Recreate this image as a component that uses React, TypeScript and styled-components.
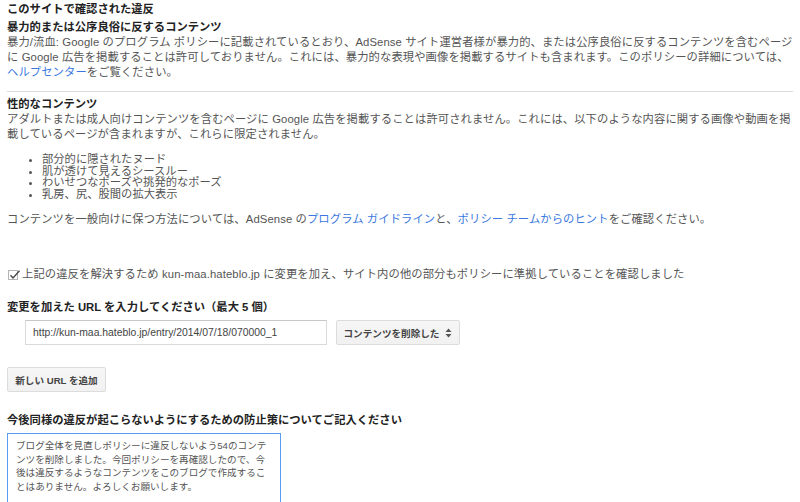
import React from "react";
import styled, { createGlobalStyle } from "styled-components";

const Global = createGlobalStyle`
  html, body { margin: 0; padding: 0; background: #fff; }
  body {
    font-family: "Liberation Sans", Arial, "Noto Sans CJK JP", sans-serif;
    color: #555;
    -webkit-font-smoothing: antialiased;
  }
`;

const Page = styled.div`
  width: 800px;
  height: 502px;
  overflow: hidden;
  padding: 2px 7px 0;
  box-sizing: border-box;
`;

const Title = styled.h2`
  margin: 0;
  font-size: 11.3px;
  line-height: 15px;
  font-weight: bold;
  color: #222;
`;

const Heading = styled.h3<{ $top?: number; $bottom?: number }>`
  margin: ${(p) => p.$top ?? 0}px 0 ${(p) => p.$bottom ?? 0}px;
  font-size: 11.3px;
  line-height: 15px;
  font-weight: bold;
  color: #222;
`;

const Body = styled.p<{ $top?: number }>`
  margin: ${(p) => p.$top ?? 0}px 0 0;
  font-size: 11.3px;
  letter-spacing: 0.1px;
  line-height: 15px;
  color: #555;
  white-space: nowrap;
`;

const Link = styled.a`
  color: #3a78de;
  text-decoration: none;
`;

const Divider = styled.hr`
  border: 0;
  border-top: 1px solid #dcdcdc;
  margin: 11px 0 5px;
`;

const List = styled.ul`
  margin: 12px 0 0;
  padding: 0 0 0 35px;
  font-size: 11.3px;
  line-height: 11.6px;
  color: #555;
  list-style: disc;
`;

const Item = styled.li`
  padding-left: 0;
`;

const CheckRow = styled.label`
  display: flex;
  align-items: center;
  gap: 4px;
  margin-top: 40px;
  font-size: 11.3px;
  letter-spacing: 0.1px;
  line-height: 15px;
  color: #555;
  white-space: nowrap;
`;

const CheckBox = styled.span`
  width: 10px;
  height: 10px;
  box-sizing: border-box;
  border: 1px solid #b5b5b5;
  background: #fff;
  position: relative;
  display: inline-flex;
  align-items: center;
  justify-content: center;
  margin-left: 1px;
`;

const UrlRow = styled.div`
  display: flex;
  align-items: center;
  gap: 9px;
  margin: 5px 0 0 18px;
`;

const UrlInput = styled.div`
  width: 302px;
  height: 25px;
  box-sizing: border-box;
  border: 1px solid #dadada;
  border-top-color: #c8c8c8;
  padding: 0 7px;
  display: flex;
  align-items: center;
  font-size: 10.4px;
  color: #444;
  background: #fff;
`;

const GrayButton = styled.div<{ $w: number }>`
  width: ${(p) => p.$w}px;
  height: 25px;
  box-sizing: border-box;
  border: 1px solid #dcdcdc;
  border-radius: 2px;
  background: linear-gradient(#f6f6f6, #f1f1f1);
  display: flex;
  align-items: center;
  justify-content: center;
  gap: 6px;
  font-size: 9.6px;
  font-weight: bold;
  color: #444;
  white-space: nowrap;
`;

const AddRow = styled.div`
  margin-top: 22px;
`;

const TextArea = styled.div`
  margin-top: 5px;
  width: 274px;
  height: 90px;
  box-sizing: border-box;
  border: 1px solid #5b9cf2;
  padding: 5px 8px;
  font-size: 9.6px;
  line-height: 13.4px;
  color: #555;
  background: #fff;
`;

function Check() {
  return (
    <CheckBox>
      <svg width="12" height="10" viewBox="0 0 12 10" style={{ position: "absolute", left: 0, top: -1 }}>
        <path d="M1.5 5.2 L4 8 L10.5 0.8" fill="none" stroke="#444" strokeWidth="1.3" />
      </svg>
    </CheckBox>
  );
}

function Arrows() {
  return (
    <svg width="7" height="10" viewBox="0 0 7 10">
      <path d="M3.5 0.5 L6.5 4 H0.5 Z" fill="#555" />
      <path d="M3.5 9.5 L6.5 6 H0.5 Z" fill="#555" />
    </svg>
  );
}

export default function App() {
  return (
    <>
      <Global />
      <Page>
        <Title>このサイトで確認された違反</Title>
        <Heading $top={3}>暴力的または公序良俗に反するコンテンツ</Heading>
        <Body>
          暴力/流血: Google のプログラム ポリシーに記載されているとおり、AdSense サイト運営者様が暴力的、または公序良俗に反するコンテンツを含むページ
          <br />
          に Google 広告を掲載することは許可しておりません。これには、暴力的な表現や画像を掲載するサイトも含まれます。このポリシーの詳細については、
          <br />
          <Link href="#">ヘルプセンター</Link>をご覧ください。
        </Body>
        <Divider />
        <Heading>性的なコンテンツ</Heading>
        <Body>
          アダルトまたは成人向けコンテンツを含むページに Google 広告を掲載することは許可されません。これには、以下のような内容に関する画像や動画を掲
          <br />
          載しているページが含まれますが、これらに限定されません。
        </Body>
        <List>
          <Item>部分的に隠されたヌード</Item>
          <Item>肌が透けて見えるシースルー</Item>
          <Item>わいせつなポーズや挑発的なポーズ</Item>
          <Item>乳房、尻、股間の拡大表示</Item>
        </List>
        <Body $top={12}>
          コンテンツを一般向けに保つ方法については、AdSense の<Link href="#">プログラム ガイドライン</Link>と、
          <Link href="#">ポリシー チームからのヒント</Link>をご確認ください。
        </Body>
        <CheckRow>
          <Check />
          上記の違反を解決するため kun-maa.hateblo.jp に変更を加え、サイト内の他の部分もポリシーに準拠していることを確認しました
        </CheckRow>
        <Heading $top={18}>変更を加えた URL を入力してください（最大 5 個）</Heading>
        <UrlRow>
          <UrlInput>http://kun-maa.hateblo.jp/entry/2014/07/18/070000_1</UrlInput>
          <GrayButton $w={124}>
            コンテンツを削除した
            <Arrows />
          </GrayButton>
        </UrlRow>
        <AddRow>
          <GrayButton $w={99}>新しい URL を追加</GrayButton>
        </AddRow>
        <Heading $top={21}>今後同様の違反が起こらないようにするための防止策についてご記入ください</Heading>
        <TextArea>
          ブログ全体を見直しポリシーに違反しないよう54のコンテンツを削除しました。今回ポリシーを再確認したので、今後は違反するようなコンテンツをこのブログで作成することはありません。よろしくお願いします。
        </TextArea>
      </Page>
    </>
  );
}
